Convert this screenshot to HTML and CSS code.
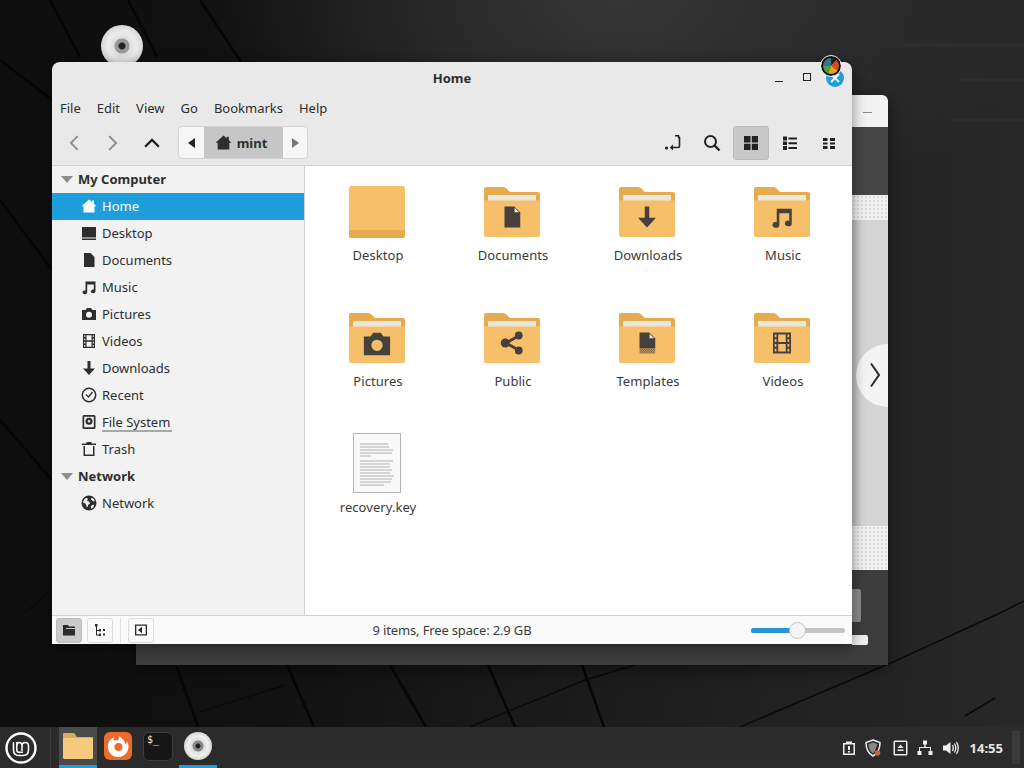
FILE: index.html
```html
<!DOCTYPE html>
<html lang="en">
<head>
    <meta charset="UTF-8">
    <title>Home</title>
    <link rel="stylesheet" href="styles.css">
</head>
<body>
    <svg class="sprites" width="0" height="0">
        <defs>
            <pattern id="dither" width="1.200" height="1.200" patternUnits="userSpaceOnUse"><rect width=".6" height=".6" fill="#46403e"/><rect x=".6" y=".6" width=".6" height=".6" fill="#46403e"/></pattern>
            <symbol id="i-home" viewBox="0 0 16 16"><path d="M8 1.500l3 2.600V2.500h2v3.400l2.500 2.300H13.500V14.500h-11V8.200H.5z"/></symbol>
            <symbol id="i-desktop" viewBox="0 0 16 16"><path d="M1 2h14v10.500H1zM1 13.500h14V15H1z"/></symbol>
            <symbol id="i-doc" viewBox="0 0 16 16"><path d="M3 1h6.500L13.500 5v10H3z"/></symbol>
            <symbol id="i-music" viewBox="0 0 16 16"><path d="M4.500 2.500h10v9.800a2.300 1.900 0 1 1-1.700-1.800V5.500H6.200v7.800a2.300 1.900 0 1 1-1.700-1.800z"/></symbol>
            <symbol id="i-camera" viewBox="0 0 16 16"><path fill-rule="evenodd" d="M1 4h3.500L6 2h4l1.500 2H15v10H1zM8 5.700a3 3 0 1 0 0 6 3 3 0 0 0 0-6z"/></symbol>
            <symbol id="i-film" viewBox="0 0 16 16"><path fill-rule="evenodd" d="M2 1h12v14H2zM5.500 2.300v5h5v-5zM5.500 8.700v5h5v-5zM3.200 2.300v1.800h1.100V2.300zM11.700 2.300v1.800h1.100V2.300zM3.200 5.500v1.800h1.100V5.500zM11.700 5.500v1.800h1.100V5.500zM3.200 8.700v1.800h1.100V8.700zM11.700 8.700v1.800h1.100V8.700zM3.200 11.900v1.800h1.100v-1.800zM11.700 11.900v1.800h1.100v-1.800z"/></symbol>
            <symbol id="i-down" viewBox="0 0 16 16"><path d="M6.500 1h3v7.500H14L8 15 2 8.500h4.500z"/></symbol>
            <symbol id="i-clock" viewBox="0 0 16 16"><circle cx="8" cy="8" r="6.700" fill="none" stroke="currentColor" stroke-width="1.500"/><path d="M4.800 7.500L7.500 10l4-5" fill="none" stroke="currentColor" stroke-width="1.300"/></symbol>
            <symbol id="i-drive" viewBox="0 0 16 16"><path fill-rule="evenodd" d="M3 1h10a1.500 1.500 0 0 1 1.500 1.500v11A1.500 1.500 0 0 1 13 15H3a1.500 1.500 0 0 1-1.500-1.500v-11A1.500 1.500 0 0 1 3 1zM3.200 2.700v10.600h9.600V2.700zM8 3.700a3.500 3.500 0 1 1 0 7 3.500 3.500 0 0 1 0-7zM8 6a1.300 1.300 0 1 0 0 2.600A1.300 1.300 0 0 0 8 6z"/></symbol>
            <symbol id="i-trash" viewBox="0 0 16 16"><path d="M5.500 1h5v1.500H15V4H1V2.500h4.500zM2.500 5H4v8.500h8V5h1.500v10h-11z"/></symbol>
            <symbol id="i-globe" viewBox="0 0 16 16"><path fill-rule="evenodd" d="M8 .5a7.500 7.500 0 1 1 0 15 7.500 7.500 0 0 1 0-15zM5.500 2.800C3.500 3.700 2.300 5.500 2 7.500l2.500 1 1 3 1.500.5V10l2-1.500-1-2-2-.5 1-2zM10.500 2.800l-.5 1.700 2.500 2 1.400-.5c-.4-1.300-1.600-2.600-3.400-3.200zM12 9.500l-2 1.500v2.700c1.500-.5 2.800-1.800 3.400-3.500z"/></symbol>
            <symbol id="i-chev-l" viewBox="0 0 16 16"><path d="M11 2.500L5.500 8l5.500 5.500" fill="none" stroke="currentColor" stroke-width="1.500"/></symbol>
            <symbol id="i-chev-r" viewBox="0 0 16 16"><path d="M5 2.500L10.500 8 5 13.500" fill="none" stroke="currentColor" stroke-width="1.500"/></symbol>
            <symbol id="i-chev-u" viewBox="0 0 16 16"><path d="M2.500 11L8 5.500l5.500 5.500" fill="none" stroke="currentColor" stroke-width="1.700"/></symbol>
            <symbol id="i-folder" viewBox="0 0 56 50">
                <path d="M2 0h17q2 0 3.500 1.500L26 5h28q2 0 2 2v13H0V2q0-2 2-2z" fill="#e6ab4e"/>
                <rect x="4" y="8" width="48" height="8" rx="1" fill="#ece7dd"/>
                <path d="M1 13.500h54l1-1V48q0 2-2 2H2q-2 0-2-2V12.500z" fill="#f6bf69"/>
            </symbol>
        </defs>
    </svg>

    <div class="desktop">
        <svg class="wall-lines" viewBox="0 0 1024 727" width="1024" height="727">
            <path d="M50 0l30 57M128 0l29 57M200 0l41 62M0 60l52 40M0 200l52 70M0 420l52 60M176 665l22 62M287 665l27 62M390 665l36 62M488 665l27 62M582 665l22 62" fill="none" stroke="#060606" stroke-width="2.500"/>
            <path d="M200 712l85-27M470 727l115-47 50-15M740 727l153-65 107-49 24-12M965 716l30-18M52 590l-30 25" fill="none" stroke="#0a0a0a" stroke-width="1.500"/>
            <path d="M900 45h124M960 80h64M950 120h74" fill="none" stroke="#323232" stroke-width="1"/>
        </svg>

        <div class="desk-cd"></div>

        <div class="back-window">
            <div class="back-title"><span class="back-min"></span></div>
            <div class="back-dark"></div>
            <div class="back-dots"></div>
            <div class="back-body">
                <div class="back-next">
                    <svg width="12" height="26" viewBox="0 0 12 26"><path d="M2 1.500L10 13 2 24.500" fill="none" stroke="currentColor" stroke-width="2"/></svg>
                </div>
            </div>
            <div class="back-dots back-dots-low"></div>
            <div class="back-foot">
                <span class="back-button"></span>
                <span class="back-line"></span>
            </div>
        </div>

        <div class="window">
            <div class="titlebar">
                <span class="title">Home</span>
                <div class="win-controls">
                    <span class="win-min"></span>
                    <span class="win-max"></span>
                    <span class="win-close">
                        <svg width="12" height="12" viewBox="0 0 12 12"><path d="M2 2l8 8M10 2l-8 8" stroke="#fff" stroke-width="2"/></svg>
                    </span>
                </div>
            </div>
            <div class="menubar">
                <span>File</span><span>Edit</span><span>View</span><span>Go</span><span>Bookmarks</span><span>Help</span>
            </div>
            <div class="toolbar">
                <div class="nav-buttons">
                    <svg class="nav-dim"><use href="#i-chev-l"/></svg>
                    <svg class="nav-dim"><use href="#i-chev-r"/></svg>
                    <svg><use href="#i-chev-u"/></svg>
                </div>
                <div class="crumbs">
                    <span class="crumb-arrow"><i class="tri-left"></i></span>
                    <span class="crumb-active"><svg width="17" height="17"><use href="#i-home"/></svg>mint</span>
                    <span class="crumb-arrow crumb-next"><i class="tri-right"></i></span>
                </div>
                <div class="view-buttons">
                    <span class="view-btn">
                        <svg width="18" height="18" viewBox="0 0 18 18"><path d="M14 3.500h1.500V12c0 1-.5 1.500-1.500 1.500H7" fill="none" stroke="currentColor" stroke-width="1.600"/><path d="M11 1.800h3.500v1.600" fill="none" stroke="currentColor" stroke-width="1.600"/><path d="M9 10.500v6l-3.200-3z"/><circle cx="2.500" cy="14" r="1.600"/></svg>
                    </span>
                    <span class="view-btn">
                        <svg width="18" height="18" viewBox="0 0 18 18"><circle cx="7.500" cy="7.500" r="5.500" fill="none" stroke="currentColor" stroke-width="2"/><path d="M11.500 11.500l5 5" stroke="currentColor" stroke-width="2.400"/></svg>
                    </span>
                    <span class="view-btn active">
                        <svg width="16" height="16" viewBox="0 0 16 16"><path d="M1 1h6.500v6.500H1zM8.800 1H15v6.500H8.800zM1 8.800h6.500V15H1zM8.800 8.800H15V15H8.800z"/></svg>
                    </span>
                    <span class="view-btn">
                        <svg width="16" height="16" viewBox="0 0 16 16"><path d="M1 1.500h4v4H1zM1 6.500h4v3.500H1zM1 11h4v4H1zM6.500 2.500H15v2H6.500zM6.500 7.200H15v2H6.500zM6.500 12H15v2H6.500z"/></svg>
                    </span>
                    <span class="view-btn">
                        <svg width="14" height="14" viewBox="0 0 14 14"><path d="M1 2h4.500v3H1zM8 2h5v3H8zM1 6.500h4.500v2H1zM8 6.500h5v2H8zM1 10h4.500v3H1zM8 10h5v3H8z"/></svg>
                    </span>
                </div>
            </div>

            <div class="main">
                <aside class="sidebar">
                    <div class="side-head"><i class="tri-down"></i>My Computer</div>
                    <div class="side-row selected"><svg><use href="#i-home"/></svg>Home</div>
                    <div class="side-row"><svg><use href="#i-desktop"/></svg>Desktop</div>
                    <div class="side-row"><svg><use href="#i-doc"/></svg>Documents</div>
                    <div class="side-row"><svg><use href="#i-music"/></svg>Music</div>
                    <div class="side-row"><svg><use href="#i-camera"/></svg>Pictures</div>
                    <div class="side-row"><svg><use href="#i-film"/></svg>Videos</div>
                    <div class="side-row"><svg><use href="#i-down"/></svg>Downloads</div>
                    <div class="side-row"><svg><use href="#i-clock"/></svg>Recent</div>
                    <div class="side-row"><svg><use href="#i-drive"/></svg><span class="usage">File System</span></div>
                    <div class="side-row"><svg><use href="#i-trash"/></svg>Trash</div>
                    <div class="side-head"><i class="tri-down"></i>Network</div>
                    <div class="side-row"><svg><use href="#i-globe"/></svg>Network</div>
                </aside>

                <section class="files">
                    <div class="file">
                        <div class="file-icon">
                            <svg class="plain-folder" width="56" height="52" viewBox="0 0 56 52"><rect width="56" height="52" rx="2.500" fill="#f6bf69"/><path d="M0 44h56v5.500q0 2.500-2.500 2.500h-51Q0 52 0 49.500z" fill="#e6ab4e"/></svg>
                        </div>
                        <span>Desktop</span>
                    </div>
                    <div class="file">
                        <div class="file-icon folder"><svg class="folder-bg"><use href="#i-folder"/></svg>
                            <svg class="emblem" viewBox="0 0 16 16"><path d="M3 1h6.500L13.500 5v10H3z"/><path d="M9.700 1.800v3.100h3z" fill="#f3e6cf"/></svg></div>
                        <span>Documents</span>
                    </div>
                    <div class="file">
                        <div class="file-icon folder"><svg class="folder-bg"><use href="#i-folder"/></svg><svg class="emblem"><use href="#i-down"/></svg></div>
                        <span>Downloads</span>
                    </div>
                    <div class="file">
                        <div class="file-icon folder"><svg class="folder-bg"><use href="#i-folder"/></svg><svg class="emblem"><use href="#i-music"/></svg></div>
                        <span>Music</span>
                    </div>
                    <div class="file">
                        <div class="file-icon folder"><svg class="folder-bg"><use href="#i-folder"/></svg><svg class="emblem emblem-wide"><use href="#i-camera"/></svg></div>
                        <span>Pictures</span>
                    </div>
                    <div class="file">
                        <div class="file-icon folder"><svg class="folder-bg"><use href="#i-folder"/></svg>
                            <svg class="emblem" viewBox="0 0 16 16"><path d="M12 3.500L4 8l8 4.500" fill="none" stroke="currentColor" stroke-width="1.800"/><circle cx="3.500" cy="8" r="3"/><circle cx="12.500" cy="3" r="2.600"/><circle cx="12.500" cy="13" r="2.600"/></svg></div>
                        <span>Public</span>
                    </div>
                    <div class="file">
                        <div class="file-icon folder"><svg class="folder-bg"><use href="#i-folder"/></svg>
                            <svg class="emblem" viewBox="0 0 16 16"><path d="M3 1h6.500L13.500 5v6.500H3z"/><path d="M9.700 1.800v3.100h3z" fill="#f3e6cf"/><rect x="3" y="11.500" width="10.500" height="3.500" fill="url(#dither)"/></svg></div>
                        <span>Templates</span>
                    </div>
                    <div class="file">
                        <div class="file-icon folder"><svg class="folder-bg"><use href="#i-folder"/></svg><svg class="emblem"><use href="#i-film"/></svg></div>
                        <span>Videos</span>
                    </div>
                    <div class="file">
                        <div class="file-icon doc-icon">
                            <svg width="48" height="60" viewBox="0 0 48 60">
                                <rect x=".5" y=".5" width="47" height="59" fill="#f9f9f9" stroke="#b4b4b4"/>
                                <path d="M7 11h28M7 14h29M7 17h33M7 20h32M7 23h11M7 28h33M7 31h30M7 34h30M7 37h32M7 40h30M7 43h34M7 46h32M7 49h31M7 52h24" stroke="#a0a0a0" stroke-width=".8"/>
                            </svg>
                        </div>
                        <span>recovery.key</span>
                    </div>
                </section>
            </div>

            <div class="statusbar">
                <div class="status-left">
                    <span class="status-btn active">
                        <svg width="14" height="14" viewBox="0 0 14 14"><path d="M1 2h5l1 1.500h6V5H4v1H13v6.500H1z"/></svg>
                    </span>
                    <span class="status-btn">
                        <svg width="14" height="14" viewBox="0 0 14 14"><path d="M2 1h2.500v2.500H4v3.500h2V6h2v2.500H6V8H4v3.500h2v-1h2V13H6v-.5H3V3.500H2zM10 6h2v2h-2zM10 10.500h2v2h-2z"/></svg>
                    </span>
                    <span class="status-sep"></span>
                    <span class="status-btn">
                        <svg width="14" height="14" viewBox="0 0 14 14"><path fill-rule="evenodd" d="M1 1.500h12v11H1zM2.300 2.800v8.400h9.400V2.800z"/><path d="M4 7l4-3.200v6.400z"/></svg>
                    </span>
                </div>
                <span class="status-text">9 items, Free space: 2.9 GB</span>
                <div class="zoom-slider"><span class="zoom-fill" style="width: 46px"></span><span class="zoom-knob"></span></div>
            </div>
        </div>

        <div class="busy-cursor"></div>
    </div>

    <footer class="panel">
        <div class="panel-left">
            <span class="mint-logo">
                <svg width="32" height="32" viewBox="0 0 32 32"><circle cx="16" cy="16" r="14.500" fill="none" stroke="#fff" stroke-width="2.400"/><path d="M8.500 10v8q0 5.500 5.500 5.500h4q5.500 0 5.500-5.500v-4q0-3.500-3.200-3.500T17 14v5M11.800 10v8q0 2.300 2.200 2.300h4M11.800 14q0-3.500 2.600-3.500t2.600 3.500" fill="none" stroke="#fff" stroke-width="1.500"/></svg>
            </span>
            <span class="panel-sep"></span>
            <span class="task running open">
                <svg width="30" height="26" viewBox="0 0 30 26"><path d="M1 0h10l3 4h15q1 0 1 1v8H0V1q0-1 1-1z" fill="#d8ad62"/><rect y="5" width="30" height="21" rx="1.500" fill="#f5ca7e"/></svg>
            </span>
            <span class="task">
                <span class="fox">
                    <svg width="23" height="23" viewBox="0 0 20 20"><path fill-rule="evenodd" d="M6 2a9 9 0 1 0 11 3c.5 2-.5 3-1 3-.5-3-3-6-6-7 1 2 0 3-1 4-1-.5-2-.5-3 0-.4-1-.2-2 0-3zM10 7a3.500 3.500 0 1 0 0 7 3.500 3.500 0 0 0 0-7z" fill="#fff"/></svg>
                </span>
            </span>
            <span class="task">
                <span class="term">$_</span>
            </span>
            <span class="task running">
                <span class="cd-small"></span>
            </span>
        </div>
        <div class="tray">
            <svg width="16" height="16" viewBox="0 0 16 16"><path fill-rule="evenodd" d="M5 1.500h6v1.500h3v12H2V3h3zM3.500 4.500v9h9v-9zM7 6h2v4H7zM7 11h2v1.500H7z"/></svg>
            <svg class="tray-shield" width="18" height="18" viewBox="0 0 18 18"><path d="M9 1l7 2.500c0 6-2 11-7 13.500C4 14.500 2 9.500 2 3.500z" fill="none" stroke="currentColor" stroke-width="1.500"/><path d="M9 3.500l4.500 1.600L11 12l-2 2.500C6 12.500 4.500 9 4.500 5.100z" fill="#888"/><circle cx="13.500" cy="14" r="2.800" fill="#c8663a"/></svg>
            <svg width="15" height="16" viewBox="0 0 15 16"><path fill-rule="evenodd" d="M2 .5h11a1.500 1.500 0 0 1 1.500 1.500v12a1.500 1.500 0 0 1-1.500 1.500H2A1.500 1.500 0 0 1 .5 14V2A1.500 1.500 0 0 1 2 .5zM2 2v12h11V2zM7.500 4.500L10.500 8h-6zM4.500 9.500h6V11h-6z"/></svg>
            <svg width="16" height="16" viewBox="0 0 16 16"><path d="M6 .5h4v4H8.700V7H14v4h1.500v4h-4v-4H13V8H3v3h1.500v4h-4v-4H2V7h5.300V4.500H6z"/></svg>
            <svg class="tray-volume" width="16" height="16" viewBox="0 0 16 16"><path d="M0 5.500h3L7.500 2v12L3 10.500H0z"/><path d="M9.500 5q1.500 3 0 6M11.500 3.500q2.500 4.500 0 9M13.500 2q3.500 6 0 12" fill="none" stroke="currentColor" stroke-width="1.300"/></svg>
            <span class="clock">14:55</span>
            <span class="show-desktop"></span>
        </div>
    </footer>
</body>
</html>
```

FILE: styles.css
```css
:root {
    --window-bg: #e9e9e9;
    --side-bg: #f2f2f2;
    --border: #d2d2d2;
    --text: #2e2e2e;
    --accent: #1f9ede;
    --emblem: #46403e;
    --panel: #2b2b2b;
}
* { box-sizing: border-box; }
html, body { margin: 0; height: 100%; overflow: hidden; }
body {
    width: 1024px;
    height: 768px;
    font-family: "Noto Sans", "Open Sans", sans-serif;
    font-size: 13px;
    color: var(--text);
    background: #111;
}
.sprites { position: absolute; }
svg { fill: currentColor; display: block; flex: none; }

/* desktop is a free canvas, windows are placed on it */
.desktop {
    position: relative;
    height: 727px;
    overflow: hidden;
    background:
        radial-gradient(ellipse 420px 240px at 620px 0, #363636, transparent),
        linear-gradient(90deg, #0e0e0e 0, #111 250px, #191919 500px, #232323 850px, #282828 100%);
}
.wall-lines { position: absolute; left: 0; top: 0; }
.desk-cd {
    position: absolute;
    left: 101px;
    top: 25px;
    width: 42px;
    height: 42px;
    border-radius: 50%;
    background: radial-gradient(circle, #222 0 3px, #999 4px 7px, #ddd 8px, #ececec 14px, #d6d6d6 21px);
}
.busy-cursor {
    position: absolute;
    left: 821px;
    top: 56px;
    width: 20px;
    height: 20px;
    border-radius: 50%;
    border: 2px solid #111;
    outline: 1px solid #eee;
    background: conic-gradient(#222 0 12%, #d2501f 12% 35%, #e8a21f 35% 55%, #4f9e3f 55% 75%, #3a6f8f 75%);
}

/* window behind the file manager */
.back-window {
    position: absolute;
    left: 136px;
    top: 95px;
    width: 752px;
    height: 570px;
    display: flex;
    flex-direction: column;
    background: #3d3d3d;
    border-radius: 6px 6px 0 0;
    box-shadow: 0 4px 18px rgba(0, 0, 0, .5);
}
.back-title {
    height: 32px;
    flex: none;
    background: linear-gradient(90deg, #e8e8e8, #f2f2f2);
    border-radius: 6px 6px 0 0;
    position: relative;
}
.back-min {
    position: absolute;
    right: 16px;
    top: 17px;
    width: 9px;
    height: 1px;
    background: #8a8a8a;
}
.back-dark { height: 68px; flex: none; background: #454545; }
.back-dots {
    height: 25px;
    flex: none;
    background-color: #f1f1f1;
    background-image: radial-gradient(#dadada 30%, transparent 36%);
    background-size: 4px 4px;
}
.back-body {
    flex: 1;
    display: flex;
    justify-content: flex-end;
    align-items: center;
    background: linear-gradient(90deg, #bcbcbc 0, #bcbcbc 716px, #d4d4d4 726px);
    padding-top: 4px;
}
.back-next {
    width: 32px;
    height: 63px;
    border-radius: 32px 0 0 32px;
    background: #f3f3f3;
    color: #2a2a2a;
    display: flex;
    align-items: center;
    justify-content: flex-end;
    padding-right: 7px;
}
.back-dots-low { height: 44px; }
.back-foot {
    height: 95px;
    flex: none;
    background: #3d3d3d;
    position: relative;
}
.back-button {
    position: absolute;
    right: 27px;
    top: 19px;
    width: 9px;
    height: 33px;
    background: #8a8a8a;
    border-radius: 0 2px 2px 0;
}
.back-line {
    position: absolute;
    right: 20px;
    top: 65px;
    width: 16px;
    height: 10px;
    background: #efefef;
    border-radius: 0 2px 2px 0;
}

/* file manager window */
.window {
    position: absolute;
    left: 52px;
    top: 62px;
    width: 800px;
    height: 582px;
    display: flex;
    flex-direction: column;
    background: var(--window-bg);
    border-radius: 8px 8px 0 0;
    box-shadow: 0 3px 14px rgba(0, 0, 0, .45);
}
.titlebar {
    height: 31px;
    flex: none;
    display: flex;
    align-items: center;
    justify-content: center;
    position: relative;
}
.title { font-weight: 700; font-size: 13px; }
.win-controls {
    position: absolute;
    right: 8px;
    top: 7px;
    display: flex;
    align-items: center;
}
.win-min { width: 8px; height: 1px; background: #222; margin-top: 6px; margin-right: 20px; }
.win-max { width: 8px; height: 8px; border: 1px solid #222; margin-right: 15px; margin-top: -2px; }
.win-close {
    width: 18px;
    height: 18px;
    border-radius: 50%;
    background: var(--accent);
    display: flex;
    align-items: center;
    justify-content: center;
}
.menubar {
    height: 29px;
    flex: none;
    display: flex;
    align-items: center;
    gap: 16px;
    padding-left: 8px;
}
.toolbar {
    height: 44px;
    flex: none;
    display: flex;
    align-items: center;
    padding: 0 5px 2px 12px;
    border-bottom: 1px solid var(--border);
}
.nav-buttons { display: flex; gap: 19px; width: 114px; color: #1c1c1c; }
.nav-buttons svg { width: 20px; height: 20px; }
.nav-dim { color: #8d8d8d; }
.crumbs {
    display: flex;
    height: 33px;
    border: 1px solid #d4d4d4;
    border-radius: 4px;
    background: #f6f6f6;
    overflow: hidden;
}
.crumb-arrow { width: 25px; display: flex; align-items: center; justify-content: center; }
.crumb-next { width: 24px; }
.crumb-active {
    width: 79px;
    display: flex;
    align-items: center;
    justify-content: center;
    gap: 5px;
    padding-right: 5px;
    background: #c6c6c6;
    font-weight: 700;
}
.tri-left { border: 5px solid transparent; border-right: 7px solid #222; border-left: 0; }
.tri-right { border: 5px solid transparent; border-left: 7px solid #777; border-right: 0; }
.view-buttons { margin-left: auto; display: flex; align-items: center; gap: 3px; }
.view-btn {
    width: 36px;
    height: 34px;
    display: flex;
    align-items: center;
    justify-content: center;
    border: 1px solid transparent;
    border-radius: 3px;
    color: #222;
}
.view-btn.active { background: #c8c8c8; border-color: #bcbcbc; }

.main { flex: 1; display: flex; min-height: 0; background: #fff; }
.sidebar {
    width: 253px;
    flex: none;
    background: var(--side-bg);
    border-right: 1px solid var(--border);
}
.side-head, .side-row {
    height: 27px;
    display: flex;
    align-items: center;
    padding-bottom: 1px;
}
.side-head { font-weight: 700; padding-left: 9px; gap: 5px; }
.tri-down { border: 6px solid transparent; border-top: 7px solid #8e8e8e; border-bottom: 0; margin-top: 1px; }
.side-row { padding-left: 29px; gap: 5px; }
.side-row svg { width: 16px; height: 16px; }
.side-row.selected { background: var(--accent); color: #fff; }
.usage { border-bottom: 2px solid #a8a8a8; line-height: 15px; margin-top: 2px; padding-right: 2px; }

.files {
    flex: 1;
    display: grid;
    grid-template-columns: repeat(4, 135px);
    grid-auto-rows: 126px;
    align-content: start;
    padding: 19px 0 0 4.500px;
}
.file {
    display: flex;
    flex-direction: column;
    align-items: center;
    color: #3a3a3a;
}
.file-icon {
    height: 60px;
    width: 56px;
    display: flex;
    align-items: flex-start;
    justify-content: center;
    margin-bottom: 1px;
    position: relative;
}
.plain-folder { margin-top: 1px; }
.doc-icon { margin-top: -4px; margin-bottom: 5px; }
.file span { line-height: 18px; padding-left: 2px; letter-spacing: .05px; }
.folder-bg { width: 56px; height: 50px; position: absolute; left: 0; top: 2px; }
.emblem {
    position: absolute;
    left: 16px;
    top: 20px;
    width: 24px;
    height: 24px;
    color: var(--emblem);
}
.emblem-wide { left: 13px; top: 18px; width: 30px; height: 30px; }

.statusbar {
    height: 29px;
    flex: none;
    display: flex;
    align-items: center;
    position: relative;
    padding: 0 7px 0 4px;
    background: #fafafa;
    border-top: 1px solid var(--border);
}
.status-left { display: flex; align-items: center; gap: 5px; }
.status-btn {
    width: 26px;
    height: 25px;
    display: flex;
    align-items: center;
    justify-content: center;
    border: 1px solid #dcdcdc;
    border-radius: 3px;
    background: #fafafa;
    color: #2b2b2b;
}
.status-btn.active { background: #c9c9c9; border-color: #bcbcbc; }
.status-sep { width: 1px; height: 25px; background: #e2e2e2; margin: 0 2px; }
.status-text {
    position: absolute;
    left: 0;
    right: 0;
    text-align: center;
    color: #3a3a3a;
    letter-spacing: -.15px;
}
.zoom-slider {
    margin-left: auto;
    width: 94px;
    height: 5px;
    border-radius: 3px;
    background: #c4c4c4;
    position: relative;
}
.zoom-fill { display: block; height: 5px; border-radius: 3px; background: #2596cf; }
.zoom-knob {
    position: absolute;
    left: 38px;
    top: -6px;
    width: 17px;
    height: 17px;
    border-radius: 50%;
    background: #f5f5f5;
    border: 1px solid #c6c6c6;
}

/* bottom panel */
.panel {
    height: 41px;
    display: flex;
    align-items: center;
    justify-content: space-between;
    background: var(--panel);
}
.panel-left { display: flex; align-items: center; height: 100%; }
.mint-logo { width: 50px; display: flex; justify-content: center; padding-right: 8px; }
.panel-sep { width: 1px; height: 100%; background: #3c3c3c; margin-right: 8px; }
.task {
    width: 38px;
    height: 100%;
    margin-right: 2px;
    display: flex;
    align-items: center;
    justify-content: center;
    border-bottom: 3px solid transparent;
}
.task.running { border-bottom-color: var(--accent); }
.task.open { background: #4a4a4a; }
.fox {
    width: 28px;
    height: 28px;
    border-radius: 6px;
    background: #ee6a2e;
    display: flex;
    align-items: center;
    justify-content: center;
}
.term {
    width: 30px;
    height: 29px;
    border-radius: 6px;
    border: 1px solid #3e3e3e;
    background: #161616;
    color: #eee;
    font-family: "DejaVu Sans Mono", monospace;
    font-size: 10px;
    padding: 1px 0 0 3px;
    line-height: 12px;
}
.cd-small {
    width: 28px;
    height: 28px;
    border-radius: 50%;
    background: radial-gradient(circle, #222 0 2px, #888 3px 5px, #ddd 6px, #efefef 10px, #d4d4d4 14px);
}
.tray { display: flex; align-items: center; gap: 9px; color: #eee; padding-right: 4px; }
.tray-shield { margin: 0 2px 0 -2px; }
.tray-volume { margin-left: 1px; }
.clock { font-weight: 700; font-size: 13px; color: #e6e6e6; margin-left: 2px; }
.show-desktop { width: 8px; height: 33px; background: #3a3a3a; }
```
